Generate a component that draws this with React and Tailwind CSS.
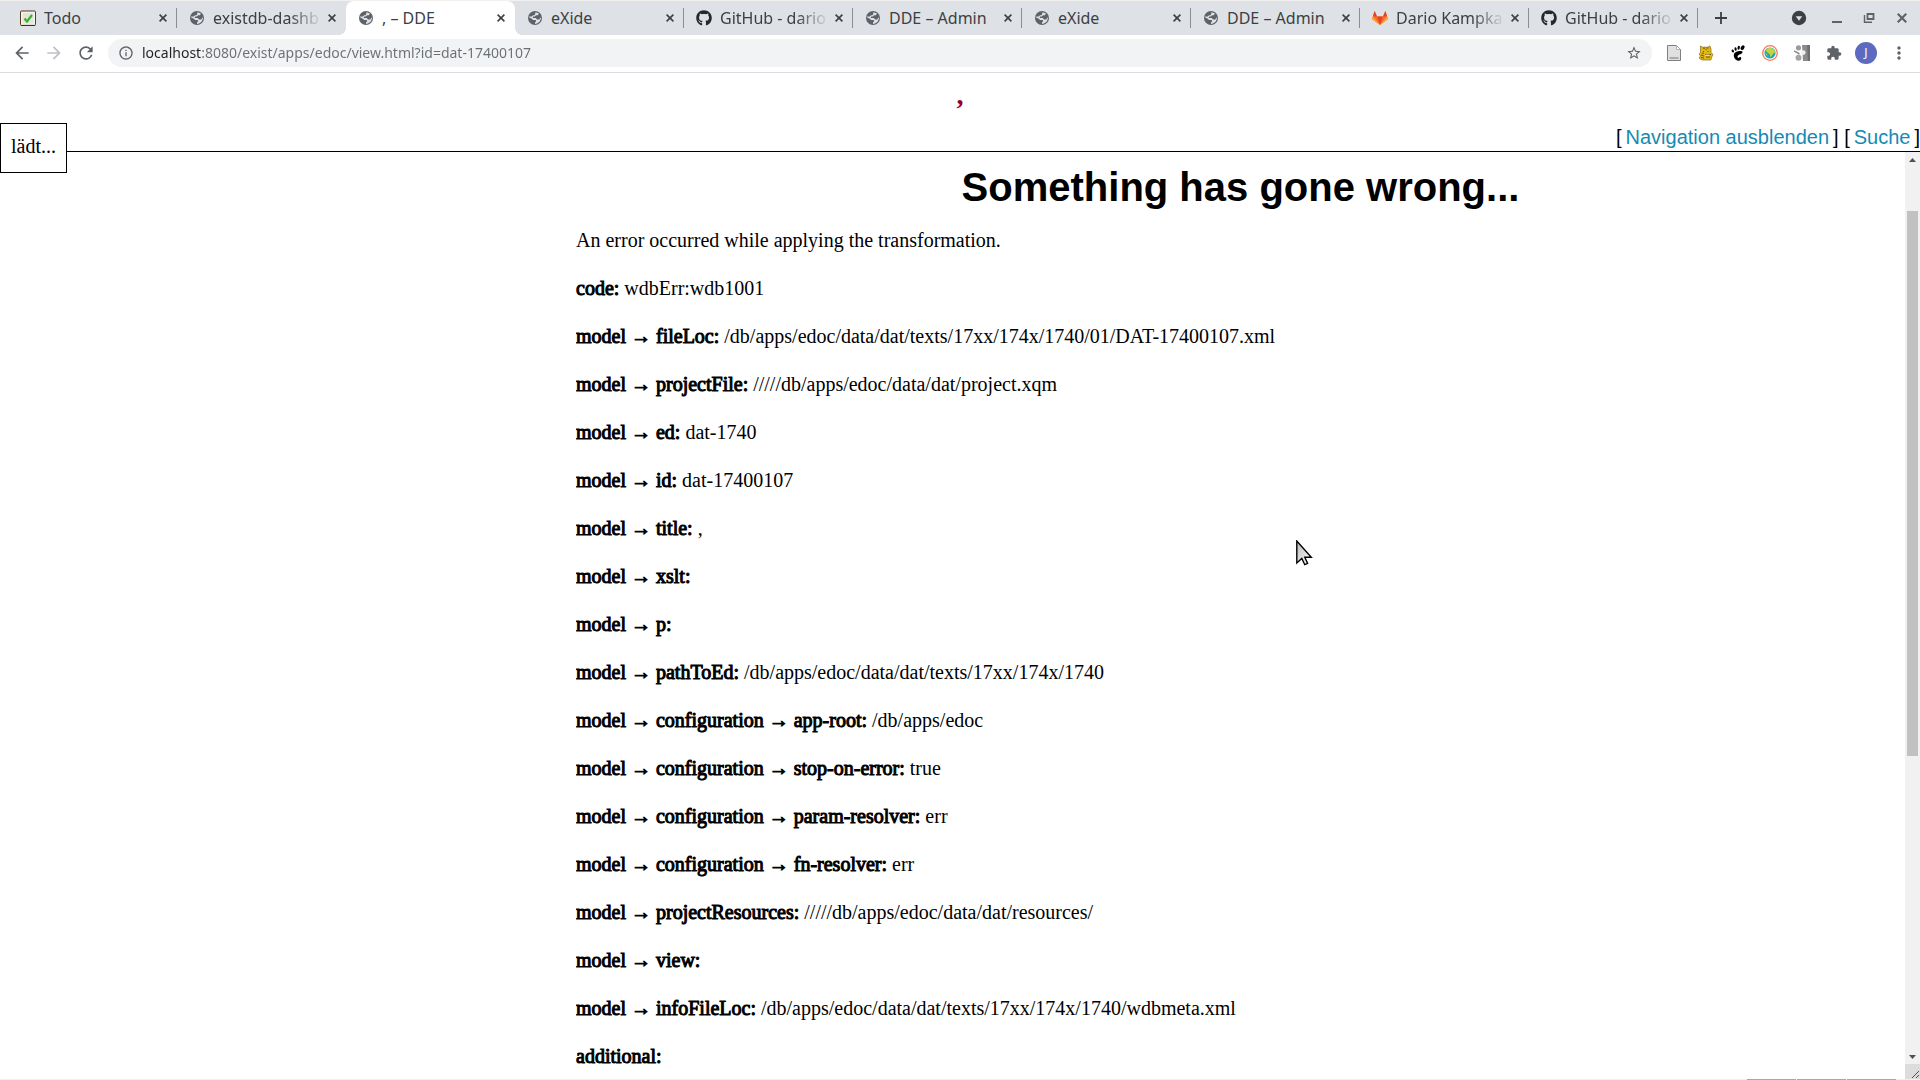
import React from "react";
import { FaGithub } from "react-icons/fa";
import {
  MdArrowBack,
  MdArrowForward,
  MdExtension,
  MdInfoOutline,
  MdMoreVert,
  MdRefresh,
  MdStarBorder,
} from "react-icons/md";

const UI = "font-['Noto_Sans',sans-serif]";
const SERIF = "font-['Liberation_Serif',serif]";
const SANS = "font-['Liberation_Sans',sans-serif]";

function GlobeIcon() {
  return (
    <svg viewBox="0 0 16 16" className="size-4 shrink-0" aria-hidden="true">
      <circle cx="8" cy="8" r="7" fill="#5f6368" />
      <path
        d="M8.6 2.2 12 3.6 10.8 5.2H9L7.8 6.5H6.2L5.6 8h3.2l1.2 1.4h2.2l1.6-2.2.2 1.4-1.4 3.2-2.6 1.8-2 .4v-1.6l1.2-1.2-.6-1.3H6.2L4.4 8.4 2.2 7.6l.2-1.4 1.8.6 1.6-1.4 2-.4z"
        fill="#dee1e6"
      />
    </svg>
  );
}

function TodoIcon() {
  return (
    <svg viewBox="0 0 16 16" className="size-4 shrink-0" aria-hidden="true">
      <rect x="0.5" y="1" width="15" height="14.5" rx="1" fill="#f4f4f0" stroke="#5b3b1c" />
      <path d="M1 .8h14" stroke="#8c8c84" strokeWidth="1.6" strokeDasharray="1 1" />
      <path d="M1 15.4h14" stroke="#4a2c10" />
      <rect x="2.5" y="3" width="11" height="10.5" fill="#dfe6da" />
      <path d="m4.5 8.5 2.5 3 5-6.5" fill="none" stroke="#3fae2a" strokeWidth="2.2" />
    </svg>
  );
}

function GitlabIcon() {
  return (
    <svg viewBox="0 0 16 16" className="size-4 shrink-0" aria-hidden="true">
      <path d="M8 15 0 9l2.6-8 2.4 5.500h6L13.4 1 16 9z" fill="#fc6d26" />
      <path d="M8 15 5 6.500h6z" fill="#e24329" />
      <path d="M8 15 0 9l1-2.8z M8 15l8-6-1-2.8z" fill="#fca326" />
      <path d="M2.6 1 5 6.500H1z M13.4 1 11 6.500h4z" fill="#e24329" />
    </svg>
  );
}

const ICONS = {
  globe: <GlobeIcon />,
  todo: <TodoIcon />,
  gitlab: <GitlabIcon />,
  github: <FaGithub className="size-4 shrink-0 text-[#24292e]" aria-hidden="true" />,
};

function Cross({ size = "size-2", width = 1.6 }) {
  return (
    <svg viewBox="0 0 8 8" className={size} aria-hidden="true">
      <path d="m.6.6 6.8 6.8M7.4.6.6 7.4" stroke="currentColor" strokeWidth={width} />
    </svg>
  );
}

const TABS = [
  { icon: "todo", title: "Todo", line: true },
  { icon: "globe", title: "existdb-dashb", long: true },
  { icon: "globe", title: ", – DDE", active: true },
  { icon: "globe", title: "eXide", line: true },
  { icon: "github", title: "GitHub - dario", long: true, line: true },
  { icon: "globe", title: "DDE – Admin", line: true },
  { icon: "globe", title: "eXide", line: true },
  { icon: "globe", title: "DDE – Admin", line: true },
  { icon: "gitlab", title: "Dario Kampka", long: true, line: true },
  { icon: "github", title: "GitHub - dario", long: true, line: true },
];

function Tab({ icon, title, long, active, line }) {
  return (
    <div
      className={
        "relative flex h-[34px] min-w-0 basis-[169px] items-center pl-3 " +
        (active ? "z-10 rounded-t-lg bg-white" : "")
      }
    >
      {active && (
        <>
          <span className="absolute bottom-0 -left-2 size-2 bg-[radial-gradient(circle_at_0_0,#dee1e6_8px,#fff_8px)]" />
          <span className="absolute -right-2 bottom-0 size-2 bg-[radial-gradient(circle_at_100%_0,#dee1e6_8px,#fff_8px)]" />
        </>
      )}
      <button
        type="button"
        className="flex min-w-0 flex-1 items-center gap-2 text-left text-base leading-5 text-[#3c4043]"
      >
        {ICONS[icon]}
        <span
          className={
            "min-w-0 flex-1 overflow-hidden whitespace-nowrap " +
            (long ? "[mask-image:linear-gradient(to_right,black_70%,transparent)]" : "")
          }
        >
          {title}
        </span>
      </button>
      <button
        type="button"
        aria-label="Close tab"
        className="mr-[3px] flex h-4 w-5 shrink-0 items-center justify-center text-[#3c4043]"
      >
        <Cross />
      </button>
      <span className={"h-5 w-px shrink-0 " + (line ? "bg-[#8a8d91]" : "")} />
    </div>
  );
}

function TabStrip() {
  return (
    <div className="flex h-[35px] items-center border-t border-[#f2f1f0] bg-[#dee1e6] pl-2 text-[#3c4043]">
      {TABS.map((tab, i) => (
        <Tab key={i} {...tab} />
      ))}
      <button type="button" aria-label="New tab" className="ml-[17px] flex size-3 items-center justify-center">
        <svg viewBox="0 0 12 12" className="size-3" aria-hidden="true">
          <path d="M6 0v12M0 6h12" stroke="currentColor" strokeWidth="1.8" />
        </svg>
      </button>
      <div className="ml-auto flex items-center pr-[13px]">
        <button type="button" aria-label="Search tabs" className="mr-[25px]">
          <svg viewBox="0 0 16 16" className="size-4" aria-hidden="true">
            <circle cx="8" cy="8" r="7.2" fill="#3c4043" />
            <path d="M4.8 6.2h6.4L8 10.8z" fill="#dee1e6" />
          </svg>
        </button>
        <button type="button" aria-label="Minimize" className="mr-[21px] flex h-4 items-end pb-[3px]">
          <span className="h-0.5 w-2.5 bg-[#5f6368]" />
        </button>
        <button type="button" aria-label="Restore" className="mr-[22px]">
          <svg viewBox="0 0 12 12" className="size-3" fill="none" stroke="#5f6368" aria-hidden="true">
            <path d="M4.5 2h6v5h-6z" strokeWidth="1.8" />
            <path d="M1.5 3v7.2H9" strokeWidth="1.4" />
          </svg>
        </button>
        <button type="button" aria-label="Close window" className="text-[#5f6368]">
          <Cross size="size-[10px]" width={1.7} />
        </button>
      </div>
    </div>
  );
}

function PageExt() {
  return (
    <svg viewBox="0 0 16 16" className="size-4" aria-hidden="true">
      <path d="M1.5.5h9l4 4v11h-13z" fill="#e0e0e0" stroke="#808080" />
      <path d="M10.5.5v4h4z" fill="#fff" stroke="#9a9a9a" strokeWidth=".7" />
      <path d="M3.5 12h9v2h-9z" fill="#aaa" />
    </svg>
  );
}

function CatExt() {
  return (
    <svg viewBox="0 0 16 16" className="size-4" aria-hidden="true">
      <path
        d="m2.500 1 2 1.200h5L12 1l1 3v3.500l2 2-1 2-1.200 3.500H4L1 13l1.500-2L1 9l1.400-1z"
        fill="#e0b813"
        stroke="#8a6d10"
        strokeWidth=".7"
      />
      <path
        d="M5 3.200h2M8.500 3h2M7.500 4.500h1M5.500 6v1M10 6v1M7 9.500h6M3 10l3 1M3 12.500l3 .5M8 12h4M6 8l-2 .5"
        stroke="#3d2f05"
        strokeWidth=".7"
      />
      <path d="M7.500 9.600h4v1h-4z" fill="#fff6c8" />
    </svg>
  );
}

function FootExt() {
  return (
    <svg viewBox="0 0 16 16" className="size-4" aria-hidden="true">
      <ellipse cx="2.8" cy="6" rx="1.1" ry="1.6" transform="rotate(-25 2.8 6)" />
      <ellipse cx="5.6" cy="4" rx="1.1" ry="1.8" transform="rotate(-8 5.6 4)" />
      <ellipse cx="8.7" cy="2.8" rx="1.2" ry="2" transform="rotate(8 8.7 2.8)" />
      <ellipse cx="12.6" cy="2.6" rx="1.7" ry="2.5" transform="rotate(30 12.6 2.6)" />
      <path d="M12 6.2C9.5 5.4 4 6.5 3.8 10c-.2 3.4 2.8 6 5 5.8 2.4-.2 3.2-3.2 1.6-3.8-1.2-.4-1.5 1.3-2.4.8-1-.6-.4-2.8 1.5-3.3 2.3-.6 4-2.6 2.5-3.3z" />
    </svg>
  );
}

function EarthExt() {
  return (
    <svg viewBox="0 0 16 16" className="size-4" aria-hidden="true">
      <circle cx="8" cy="8" r="7.3" fill="#fff" stroke="#f47a5a" strokeWidth="1.3" />
      <circle cx="8" cy="8" r="5.6" fill="#1fa9c0" />
      <path d="M3.5 5.5 6 3.2l3-.4 3.200 2 .8 3-1.800.5L10 10.500 8.500 12l-.8-3-2-1.500z" fill="#c6d63a" />
      <path d="m3 8 2 1 .5 2.500z" fill="#c6d63a" />
    </svg>
  );
}

function ShareExt() {
  return (
    <svg viewBox="0 0 16 16" className="size-4" aria-hidden="true">
      <path d="M8 0h8v16H9z" fill="#8b8b8b" />
      <path d="M13 0h3v16h-2z" fill="#6f6f6f" />
      <circle cx="4.5" cy="2.8" r="2.6" fill="#9b9b9b" />
      <circle cx="9.2" cy="7.6" r="2.4" fill="#f0f0f0" />
      <path d="m0 6 3 1.5L5.5 9" stroke="#8f8f8f" strokeWidth="1.5" fill="none" />
      <circle cx="4.5" cy="12.8" r="3" fill="#a5a5a5" />
    </svg>
  );
}

const EXTENSIONS = [
  { name: "Page notes", icon: <PageExt /> },
  { name: "Tiger", icon: <CatExt /> },
  { name: "GNOME Shell integration", icon: <FootExt /> },
  { name: "Earth", icon: <EarthExt /> },
  { name: "Share", icon: <ShareExt /> },
  { name: "Extensions", icon: <MdExtension className="size-4 text-[#5f6368]" /> },
];

function Toolbar() {
  return (
    <div className="flex h-[38px] items-center border-b border-[#dadce0] bg-white pr-[11px] pb-px pl-3 text-[#5f6368]">
      <div className="flex items-center gap-3">
        <button type="button" aria-label="Back">
          <MdArrowBack className="size-5" />
        </button>
        <button type="button" aria-label="Forward" className="text-[#bdc1c6]">
          <MdArrowForward className="size-5" />
        </button>
        <button type="button" aria-label="Reload">
          <MdRefresh className="size-5" />
        </button>
      </div>
      <div className="ml-3 flex h-7 flex-1 items-center rounded-full bg-[#f1f3f4] pr-2.5 pl-2.5">
        <button type="button" aria-label="Site information">
          <MdInfoOutline className="size-4" />
        </button>
        <input
          type="text"
          aria-label="Address"
          defaultValue="localhost:8080/exist/apps/edoc/view.html?id=dat-17400107"
          className="ml-2 min-w-0 flex-1 bg-[linear-gradient(to_right,#202124_60px,#6b6f74_60px)] bg-clip-text text-sm text-transparent outline-none"
        />
        <button type="button" aria-label="Bookmark this page">
          <MdStarBorder className="size-4" />
        </button>
      </div>
      <div className="ml-3.5 flex items-center gap-4">
        {EXTENSIONS.map((e) => (
          <button key={e.name} type="button" aria-label={e.name}>
            {e.icon}
          </button>
        ))}
      </div>
      <button
        type="button"
        aria-label="Profile"
        className="ml-[13px] flex size-[22px] items-center justify-center rounded-full bg-[#5c6bc0] text-xs text-white"
      >
        J
      </button>
      <button type="button" aria-label="Menu" className="ml-3">
        <MdMoreVert className="size-5" />
      </button>
    </div>
  );
}

const ROWS = [
  ["code:", "wdbErr:wdb1001"],
  ["model → fileLoc:", "/db/apps/edoc/data/dat/texts/17xx/174x/1740/01/DAT-17400107.xml"],
  ["model → projectFile:", "/////db/apps/edoc/data/dat/project.xqm"],
  ["model → ed:", "dat-1740"],
  ["model → id:", "dat-17400107"],
  ["model → title:", ","],
  ["model → xslt:", ""],
  ["model → p:", ""],
  ["model → pathToEd:", "/db/apps/edoc/data/dat/texts/17xx/174x/1740"],
  ["model → configuration → app-root:", "/db/apps/edoc"],
  ["model → configuration → stop-on-error:", "true"],
  ["model → configuration → param-resolver:", "err"],
  ["model → configuration → fn-resolver:", "err"],
  ["model → projectResources:", "/////db/apps/edoc/data/dat/resources/"],
  ["model → view:", ""],
  ["model → infoFileLoc:", "/db/apps/edoc/data/dat/texts/17xx/174x/1740/wdbmeta.xml"],
  ["additional:", ""],
];

function PageHeader() {
  return (
    <header className="relative flex h-[79px] flex-col justify-between border-b border-black">
      <h1 className={"pt-2 text-center text-[28px] leading-7 font-bold text-[#990022] " + SERIF}>,</h1>
      <nav className={"flex justify-end gap-1 text-xl leading-7 " + SANS}>
        <span>[</span>
        <a href="#nav" className="text-[#168ab3]">
          Navigation ausblenden
        </a>
        <span>] [</span>
        <a href="#suche" className="text-[#168ab3]">
          Suche
        </a>
        <span>]</span>
      </nav>
      <div
        className={
          "absolute top-[50px] left-0 h-[50px] border border-black bg-white px-2.5 py-2 text-xl leading-7 " + SERIF
        }
      >
        lädt...
      </div>
    </header>
  );
}

function Scrollbar() {
  return (
    <div className="flex w-[15px] shrink-0 flex-col bg-[#f1f1f1]" aria-hidden="true">
      <div className="flex h-[15px] items-center justify-center">
        <svg viewBox="0 0 7 4" className="h-1 w-[7px]">
          <path d="M0 4 3.5 0 7 4z" fill="#505050" />
        </svg>
      </div>
      <div className="flex-1 px-0.5 pt-11">
        <div className="h-[65%] bg-[#c1c1c1]" />
      </div>
      <div className="flex h-[15px] items-center justify-center">
        <svg viewBox="0 0 7 4" className="h-1 w-[7px]">
          <path d="M0 0h7L3.5 4z" fill="#505050" />
        </svg>
      </div>
      <div className="h-[15px] bg-[#dcdcdc]">
        <svg viewBox="0 0 15 15" className="size-[15px]">
          <path d="m7 14 7-7m-3 7 3-3" stroke="#505050" />
        </svg>
      </div>
    </div>
  );
}

function Cursor() {
  return (
    <svg
      viewBox="0 0 18 28"
      className="pointer-events-none absolute top-[540px] left-[1296px] h-7 w-[18px]"
      aria-hidden="true"
    >
      <defs>
        <linearGradient id="arrow-fill" x1="0" y1="0" x2="1" y2="1">
          <stop offset="0" stopColor="#bbb" />
          <stop offset="1" stopColor="#fff" />
        </linearGradient>
      </defs>
      <path
        d="M.8 1v22l5-4.5 3 6.2 2.8-1.2-2.8-6.2h6.5z"
        fill="url(#arrow-fill)"
        stroke="#000"
        strokeWidth="1.4"
      />
    </svg>
  );
}

export default function App() {
  return (
    <div className="relative flex h-screen flex-col overflow-hidden bg-white text-black">
      <div className={UI}>
        <TabStrip />
        <Toolbar />
      </div>
      <PageHeader />
      <div className="flex min-h-0 flex-1">
        <main className={"ml-[30%] min-w-0 flex-1 overflow-hidden text-xl leading-7 " + SERIF}>
          <h2 className={"pt-3 text-center text-[40px] leading-[46px] font-bold " + SANS}>
            Something has gone wrong...
          </h2>
          <div className="flex flex-col gap-5 pt-4">
            <p>An error occurred while applying the transformation.</p>
            {ROWS.map(([label, value]) => (
              <p key={label}>
                <b className="font-normal [-webkit-text-stroke:1px_black]">{label}</b> {value}
              </p>
            ))}
          </div>
        </main>
        <Scrollbar />
      </div>
      <div className="flex h-px justify-end gap-px bg-[#f0f0f0] pr-6" aria-hidden="true">
        <span className="w-[49px] bg-[#a8a8a8]" />
        <span className="w-[49px] bg-[#a8a8a8]" />
        <span className="w-[49px] bg-[#a8a8a8]" />
      </div>
      <Cursor />
    </div>
  );
}
